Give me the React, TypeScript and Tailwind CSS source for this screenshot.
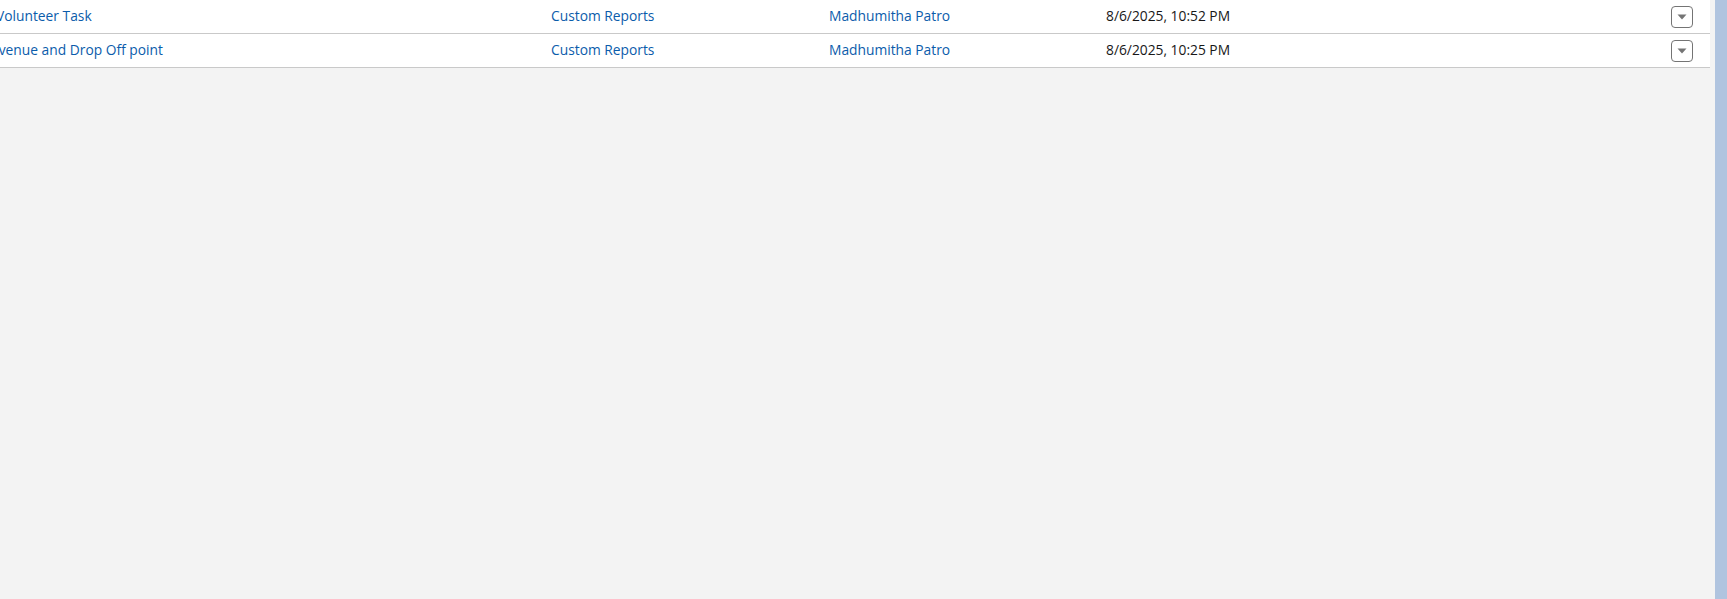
import React from "react";

const rows = [
  { name: "Volunteer Task", offset: -4, folder: "Custom Reports", owner: "Madhumitha Patro", date: "8/6/2025, 10:52 PM" },
  { name: "Avenue and Drop Off point", offset: -10, folder: "Custom Reports", owner: "Madhumitha Patro", date: "8/6/2025, 10:25 PM" },
];

function MenuButton() {
  return (
    <button className="w-[22px] h-[22px] rounded-[4px] border border-[#747474] bg-white flex items-center justify-center">
      <svg width="10" height="6" viewBox="0 0 10 6">
        <path d="M0.5 0.5 L9.5 0.5 L5 5.5 Z" fill="#747474" />
      </svg>
    </button>
  );
}

export default function App() {
  return (
    <div className="w-[1727px] h-[599px] bg-[#f3f3f3] flex overflow-hidden" style={{ fontFamily: '"Open Sans", "Noto Sans", sans-serif' }}>
      <div className="w-[1710px] overflow-hidden">
        {rows.map((r, i) => (
          <div key={i} className="h-[34px] bg-white border-b border-[#c9c9c9] flex items-center text-[13.8px]">
            <div className="w-[551px] shrink-0 overflow-hidden">
              <div className="text-[#0b5cab] whitespace-nowrap" style={{ marginLeft: r.offset }}>{r.name}</div>
            </div>
            <div className="w-[278px] shrink-0 text-[#0b5cab] whitespace-nowrap">{r.folder}</div>
            <div className="w-[277px] shrink-0 text-[#0b5cab] whitespace-nowrap">{r.owner}</div>
            <div className="flex-1 text-[#181818] whitespace-nowrap">{r.date}</div>
            <div className="pr-[17px]">
              <MenuButton />
            </div>
          </div>
        ))}
      </div>
      <div className="w-[5px]" />
      <div className="w-[12px] h-full bg-[#b0c4df]" />
    </div>
  );
}
